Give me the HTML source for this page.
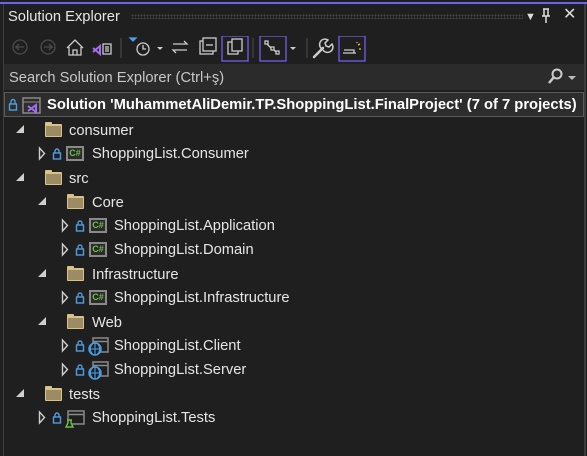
<!DOCTYPE html>
<html><head><meta charset="utf-8"><style>
*{margin:0;padding:0;box-sizing:border-box}
body{width:587px;height:456px;background:#1f1f1f;font-family:"Segoe UI","Liberation Sans",sans-serif;color:#e6e6e6;position:relative;overflow:hidden;font-size:14.7px}
.a{position:absolute}
.t{position:absolute;white-space:nowrap;font-size:14.7px;line-height:18px}
.ex{position:absolute;width:0;height:0}
.open{border-left:8px solid transparent;border-bottom:8px solid #cfcfcf}
.fold{position:absolute;width:17px;height:13px;background:#d9c18a;border-radius:1px}
.fold:before{content:"";position:absolute;left:0;top:-2px;width:7px;height:3px;background:#d9c18a;border-radius:1px 1px 0 0}
.fold:after{content:"";position:absolute;left:1px;top:2px;width:15px;height:10px;background:#9d8b63}
.cs{position:absolute;width:18px;height:15px;border:2px solid #8a8a8a;background:#2a2a2a;color:#6cc04a;font:bold 9px "Liberation Sans",sans-serif;line-height:11px;text-align:center}
</style></head><body>
<div class="a" style="left:0;top:2px;width:587px;height:2px;background:#7160e8"></div>
<div class="a" style="left:3px;top:4px;width:1px;height:452px;background:#3c3c3c"></div>
<div class="a" style="left:584px;top:4px;width:2px;height:452px;background:#3c3c3c"></div>
<div class="t" style="left:8px;top:8px">Solution Explorer</div>
<div class="a" style="left:131px;top:14px;width:392px;height:5px;background-image:radial-gradient(#444 0.8px,transparent 0.9px);background-size:3px 3px"></div>
<div class="t" style="left:525px;top:8px;font-size:11px;color:#ddd">▼</div>
<svg class="a" style="left:540px;top:8px" width="12" height="16" fill="none" stroke="#ddd" stroke-width="1.5"><path d="M3 1h6 M4 1v7h4V1 M2 8h8 M6 8v7"/></svg>
<div class="t" style="left:563px;top:6px;font-size:16px;color:#ddd">✕</div>
<svg class="a" style="left:10px;top:36px" width="360" height="26" viewBox="0 0 360 26" fill="none" stroke-width="1.3">
<circle cx="10" cy="11" r="7" stroke="#4a4a4a"/><path d="M14 11h-8 l3-3 M6 11l3 3" stroke="#4a4a4a"/>
<circle cx="38" cy="11" r="7" stroke="#4a4a4a"/><path d="M34 11h8 l-3-3 M42 11l-3 3" stroke="#4a4a4a"/>
<path d="M57 12 L65 4 L73 12 M59 11 V19 H71 V11 M63 19 V14 H67 V19" stroke="#ccc"/>
<path d="M93 8 h8 v10 h-8z M95 11h4 M95 13h4 M95 15h4" stroke="#ccc"/>
<path d="M83 12 L90 18 L90 10 L83 16" stroke="#a26ef0" stroke-width="2"/>
<line x1="111" y1="2" x2="111" y2="22" stroke="#444"/>
<path d="M120 2 h6 l-3 3z" fill="#4aa0e8" stroke="#4aa0e8"/>
<circle cx="133" cy="13" r="6" stroke="#ccc"/><path d="M133 9v4h3" stroke="#ccc"/>
<path d="M147 11 l3 3 l3 -3z" fill="#ccc" stroke="none"/>
<path d="M163 8h14 l-3 -3 M177 14h-14 l3 3" stroke="#ccc"/>
<rect x="190" y="5" width="13" height="13" stroke="#ccc"/><rect x="193" y="2" width="13" height="13" stroke="#ccc" fill="#1f1f1f"/><path d="M196 9h7" stroke="#ccc"/>
<rect x="212" y="0" width="26" height="25" stroke="#7160e8"/>
<rect x="218" y="6" width="10" height="12" stroke="#ccc"/><rect x="222" y="3" width="10" height="12" stroke="#ccc" fill="#1f1f1f"/>
<line x1="243" y1="2" x2="243" y2="22" stroke="#444"/>
<rect x="250" y="0" width="26" height="25" stroke="#7160e8"/>
<path d="M255 5h3v3h-3z M261 11h3v3h-3z M266 15h3v3h-3z M257 8l4 4 M264 14l2 2" stroke="#ccc"/>
<path d="M280 11 l3 3 l3 -3z" fill="#ccc" stroke="none"/>
<line x1="297" y1="2" x2="297" y2="22" stroke="#444"/>
<path d="M304 21 L313 12" stroke="#ccc" stroke-width="2.5" stroke-linecap="round"/>
<path d="M312 13 a5 5 0 0 1 6-9 l-3 3 1 3 3 1 3-3 a5 5 0 0 1 -9 6" stroke="#ccc" stroke-width="1.5"/>
<rect x="329" y="0" width="26" height="25" stroke="#7160e8"/>
<path d="M333 17h13 M334 14h10v3" stroke="#ccc"/>
<path d="M348 9l2-1 M349 13h2 M347 6v1" stroke="#e8c060"/>
</svg>
<div class="a" style="left:4px;top:64px;width:580px;height:26px;background:#2b2b2b"></div>
<div class="t" style="left:9px;top:69px;color:#c8c8c8">Search Solution Explorer (Ctrl+ş)</div>
<svg class="a" style="left:548px;top:68px" width="34" height="18" fill="none"><circle cx="9" cy="6" r="4.5" stroke="#ccc" stroke-width="2"/><path d="M6 9 L1 15" stroke="#ccc" stroke-width="2.5"/><path d="M20 8 l4 4 l4-4z" fill="#bbb"/></svg>
<div class="a" style="left:4px;top:92px;width:580px;height:25px;background:#2d2d2d;border:1px solid #5a5a5a"></div>
<svg class="a" style="left:8px;top:97px" width="34" height="18" fill="none"><rect x="1.5" y="7" width="7" height="6" stroke="#4d9de0" stroke-width="1.4"/><path d="M3 7 V4.5 a2 2 0 0 1 4 0 V7" stroke="#4d9de0" stroke-width="1.4"/><rect x="15" y="1" width="17" height="15" stroke="#8a8a8a" stroke-width="1.5"/><path d="M15 5h17" stroke="#8a8a8a"/><path d="M20 9l8 6v-7l-8 6" stroke="#a26ef0" stroke-width="2"/></svg>
<div class="t" style="left:47px;top:96px;font-weight:bold;color:#fff;font-size:14.75px">Solution 'MuhammetAliDemir.TP.ShoppingList.FinalProject' (7 of 7 projects)</div>

<div class="ex open a" style="left:16px;top:125px"></div><div class="fold" style="left:45px;top:124px"></div><div class="t" style="left:69px;top:122px">consumer</div>
<div class="ex open a" style="left:16px;top:173px"></div><div class="fold" style="left:45px;top:172px"></div><div class="t" style="left:69px;top:170px">src</div>
<div class="ex open a" style="left:38px;top:197px"></div><div class="fold" style="left:67px;top:196px"></div><div class="t" style="left:92px;top:194px">Core</div>
<div class="ex open a" style="left:38px;top:269px"></div><div class="fold" style="left:67px;top:268px"></div><div class="t" style="left:92px;top:266px">Infrastructure</div>
<div class="ex open a" style="left:38px;top:317px"></div><div class="fold" style="left:67px;top:316px"></div><div class="t" style="left:92px;top:314px">Web</div>
<div class="ex open a" style="left:16px;top:389px"></div><div class="fold" style="left:45px;top:388px"></div><div class="t" style="left:69px;top:386px">tests</div>

<svg class="a" style="left:0;top:0" width="120" height="456" fill="none" stroke-width="1.4">
<g stroke="#cfcfcf"><path d="M39.5 148v11l5-5.5z"/><path d="M62.5 220v11l5-5.5z"/><path d="M62.5 244v11l5-5.5z"/><path d="M62.5 292v11l5-5.5z"/><path d="M62.5 340v11l5-5.5z"/><path d="M62.5 364v11l5-5.5z"/><path d="M39.5 412v11l5-5.5z"/></g>
<g stroke="#4d9de0">
<g transform="translate(53,149)"><rect x="0.5" y="4" width="7" height="6"/><path d="M2 4V2a2 2 0 0 1 4 0v2"/></g>
<g transform="translate(76,221)"><rect x="0.5" y="4" width="7" height="6"/><path d="M2 4V2a2 2 0 0 1 4 0v2"/></g>
<g transform="translate(76,245)"><rect x="0.5" y="4" width="7" height="6"/><path d="M2 4V2a2 2 0 0 1 4 0v2"/></g>
<g transform="translate(76,293)"><rect x="0.5" y="4" width="7" height="6"/><path d="M2 4V2a2 2 0 0 1 4 0v2"/></g>
<g transform="translate(76,341)"><rect x="0.5" y="4" width="7" height="6"/><path d="M2 4V2a2 2 0 0 1 4 0v2"/></g>
<g transform="translate(76,365)"><rect x="0.5" y="4" width="7" height="6"/><path d="M2 4V2a2 2 0 0 1 4 0v2"/></g>
<g transform="translate(53,413)"><rect x="0.5" y="4" width="7" height="6"/><path d="M2 4V2a2 2 0 0 1 4 0v2"/></g>
</g>
<g transform="translate(88,336)"><rect x="5" y="2" width="15" height="14" stroke="#8a8a8a" stroke-width="1.5" fill="#1f1f1f"/><path d="M5 5.5h15" stroke="#8a8a8a" stroke-width="1.5"/><circle cx="7" cy="13" r="6" fill="#1f1f1f" stroke="#4d9de0" stroke-width="1.5"/><path d="M1 13h12 M7 7v12 M4.5 8a7 7 0 0 0 0 10 M9.5 8a7 7 0 0 1 0 10" stroke="#4d9de0" stroke-width="1.1"/></g>
<g transform="translate(88,360)"><rect x="5" y="2" width="15" height="14" stroke="#8a8a8a" stroke-width="1.5" fill="#1f1f1f"/><path d="M5 5.5h15" stroke="#8a8a8a" stroke-width="1.5"/><circle cx="7" cy="13" r="6" fill="#1f1f1f" stroke="#4d9de0" stroke-width="1.5"/><path d="M1 13h12 M7 7v12 M4.5 8a7 7 0 0 0 0 10 M9.5 8a7 7 0 0 1 0 10" stroke="#4d9de0" stroke-width="1.1"/></g>
<g transform="translate(65,408)"><rect x="3" y="3" width="16" height="13" stroke="#8a8a8a" stroke-width="1.5"/><path d="M3 6.5h16" stroke="#8a8a8a" stroke-width="1.5"/><path d="M2 12h5 M3 12v3l-2 4h7l-2-4v-3" fill="#1f1f1f" stroke="#6cc04a" stroke-width="1.4"/></g>
</svg>
<div class="cs" style="left:66px;top:146px">C#</div><div class="t" style="left:92px;top:145px">ShoppingList.Consumer</div>
<div class="cs" style="left:89px;top:218px">C#</div><div class="t" style="left:114px;top:217px">ShoppingList.Application</div>
<div class="cs" style="left:89px;top:242px">C#</div><div class="t" style="left:114px;top:241px">ShoppingList.Domain</div>
<div class="cs" style="left:89px;top:290px">C#</div><div class="t" style="left:114px;top:289px">ShoppingList.Infrastructure</div>
<div class="t" style="left:114px;top:337px">ShoppingList.Client</div>
<div class="t" style="left:114px;top:361px">ShoppingList.Server</div>
<div class="t" style="left:92px;top:409px">ShoppingList.Tests</div>
</body></html>
